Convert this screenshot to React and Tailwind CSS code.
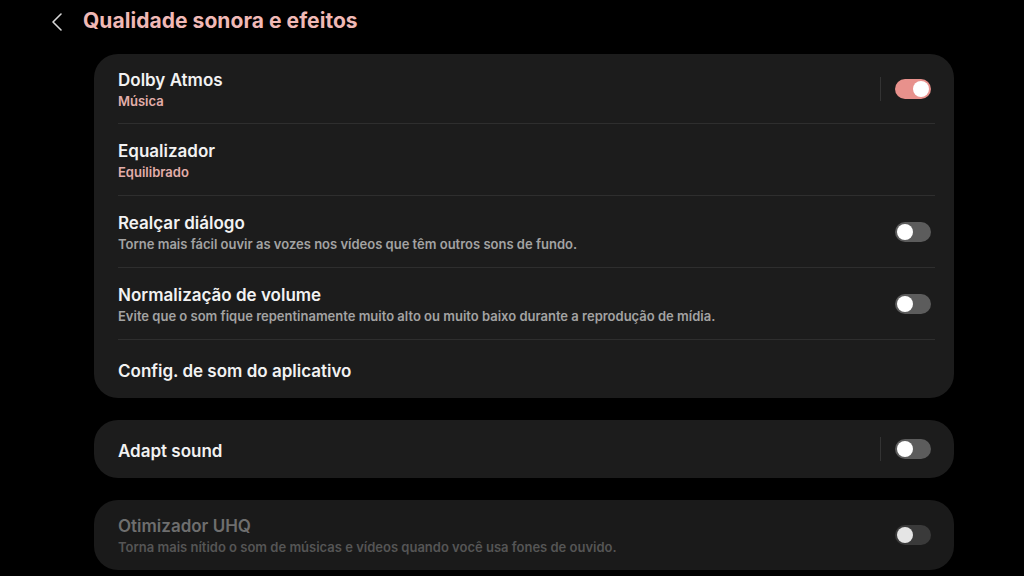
import React from "react";

const Toggle = ({ on, disabled }) => (
  <div
    className={`w-[36px] h-[20px] rounded-full flex items-center px-[2px] ${
      on ? "bg-[#e8918c] justify-end" : disabled ? "bg-[#3a3a3a] justify-start" : "bg-[#5c5c5c] justify-start"
    }`}
  >
    <div className={`w-[16px] h-[16px] rounded-full ${disabled ? "bg-[#e5e5e5]" : "bg-white"}`} />
  </div>
);

const Row = ({ title, sub, subColor, toggle, on, divider, bar, disabled, h = "h-[72px]" }) => (
  <div className={`${h} flex items-center pl-6 pr-[23px] relative`}>
    <div className="flex-1 flex flex-col justify-center pt-[3px]">
      <div className={`text-[17px] font-semibold leading-5 ${disabled ? "text-[#6e6e6e]" : "text-[#f2f2f2]"}`}>{title}</div>
      {sub && (
        <div className={`text-[13px] font-semibold leading-5 mt-[1px] ${subColor}`}>{sub}</div>
      )}
    </div>
    {bar && <div className="w-px h-[24px] bg-[#333] mr-[14px]" />}
    {toggle && <Toggle on={on} disabled={disabled} />}
    {divider && <div className="absolute bottom-0 left-6 right-[19px] h-px bg-[#2e2e2e]" />}
  </div>
);

export default function App() {
  return (
    <div className="w-[1024px] h-[576px] bg-black overflow-hidden" style={{ fontFamily: "Inter, 'Noto Sans', sans-serif" }}>
      <div className="h-[42px] flex items-center pl-[50px]">
        <svg width="14" height="20" viewBox="0 0 14 20" fill="none" className="mr-[19px] mt-[1px]">
          <path d="M11 2 L3 10 L11 18" stroke="#d8d8d8" strokeWidth="1.6" strokeLinecap="round" strokeLinejoin="round" />
        </svg>
        <div className="text-[21px] font-bold text-[#f0b9b6] tracking-[0.05px]">Qualidade sonora e efeitos</div>
      </div>
      <div className="pl-[94px] pt-[12px] flex flex-col gap-[22px]">
        <div className="w-[860px] rounded-[24px] bg-[#1c1c1c]">
          <Row title="Dolby Atmos" sub="Música" subColor="text-[#e3aeaa]" toggle on bar divider h="h-[70px]" />
          <Row title="Equalizador" sub="Equilibrado" subColor="text-[#e3aeaa]" divider />
          <Row title="Realçar diálogo" sub="Torne mais fácil ouvir as vozes nos vídeos que têm outros sons de fundo." subColor="text-[#a3a3a3]" toggle divider />
          <Row title="Normalização de volume" sub="Evite que o som fique repentinamente muito alto ou muito baixo durante a reprodução de mídia." subColor="text-[#a3a3a3]" toggle divider />
          <Row title="Config. de som do aplicativo" h="h-[58px]" />
        </div>
        <div className="w-[860px] rounded-[24px] bg-[#1c1c1c]">
          <Row title="Adapt sound" toggle bar h="h-[58px]" />
        </div>
        <div className="w-[860px] rounded-[24px] bg-[#1a1a1a]">
          <Row title="Otimizador UHQ" sub="Torna mais nítido o som de músicas e vídeos quando você usa fones de ouvido." subColor="text-[#555555]" toggle disabled h="h-[70px]" />
        </div>
      </div>
    </div>
  );
}
